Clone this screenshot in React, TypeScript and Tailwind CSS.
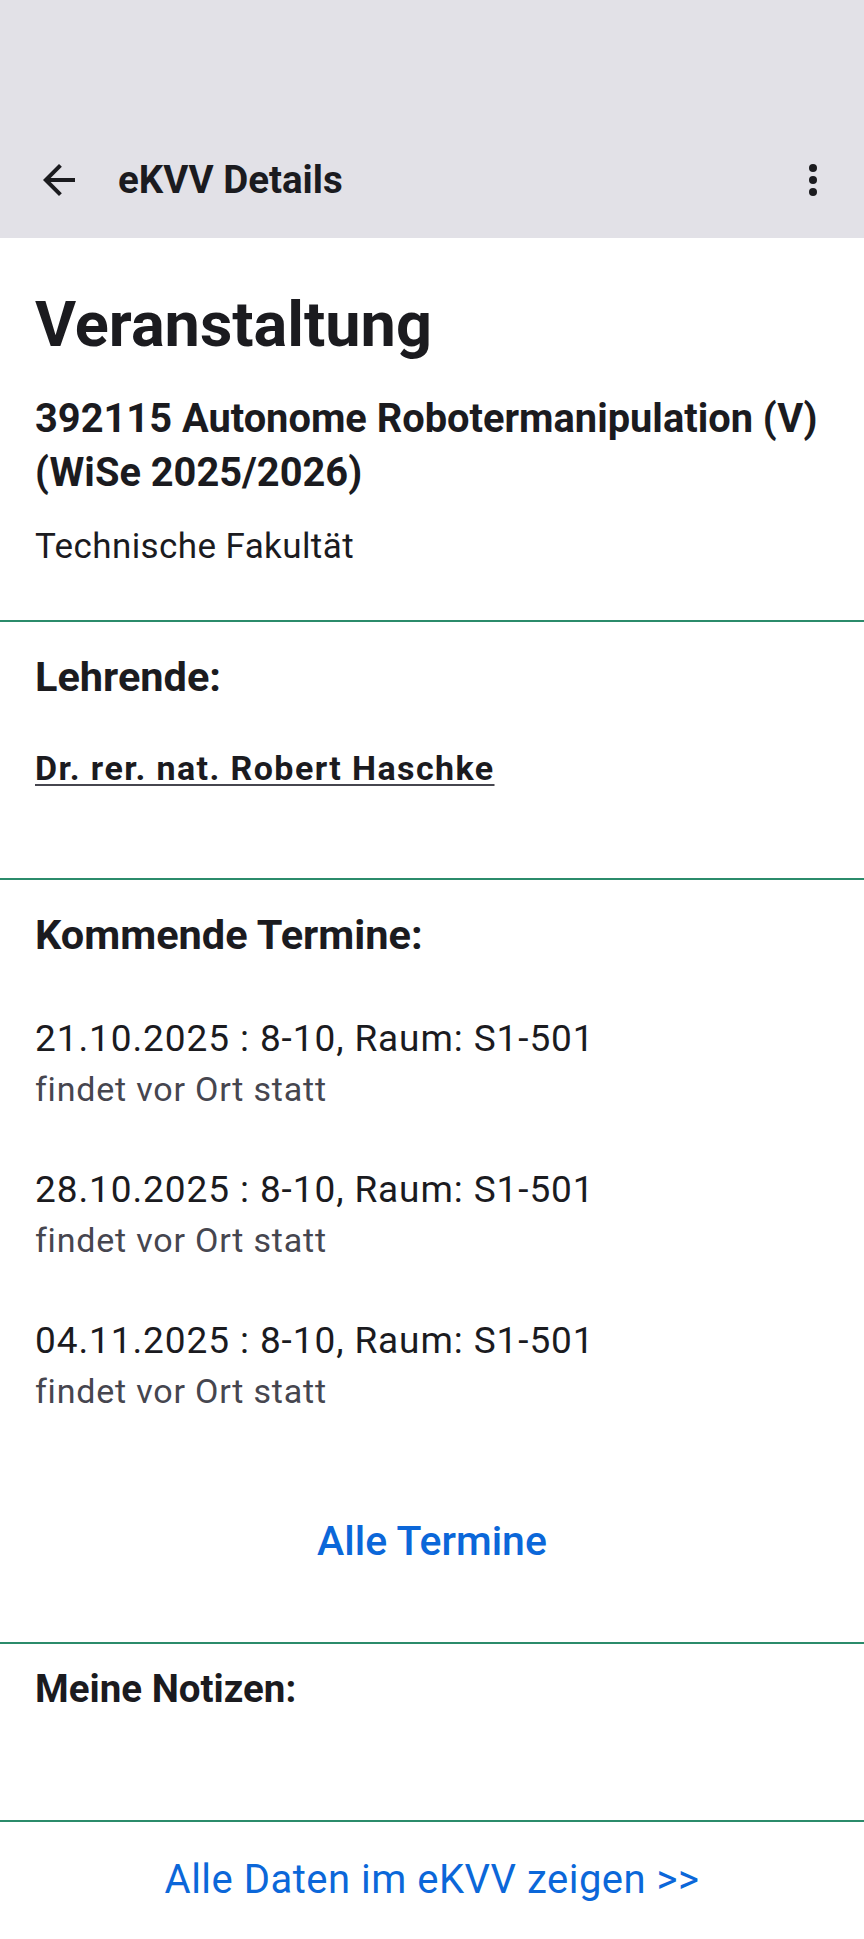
const termine = [
  { datum: "21.10.2025", zeit: "8-10", raum: "S1-501" },
  { datum: "28.10.2025", zeit: "8-10", raum: "S1-501" },
  { datum: "04.11.2025", zeit: "8-10", raum: "S1-501" },
];

function Divider() {
  return <div className="h-[2px] w-full bg-[#2b8b6b]" />;
}

export default function App() {
  return (
    <div className="w-full min-h-[1939px] bg-white text-[#1b1b1f] font-['Roboto',sans-serif]">
      {/* app bar */}
      <div className="h-[238px] bg-[#e2e1e7] flex flex-col justify-end">
        <div className="h-[116px] flex items-center">
          <div className="w-[118px] flex justify-center">
            <svg width="48" height="48" viewBox="0 -960 960 960" fill="#1b1b1f">
              <path d="M313-440l224 224-57 56-320-320 320-320 57 56-224 224h487v80H313z" />
            </svg>
          </div>
          <h1 className="flex-1 text-[38.5px] font-bold leading-[48px]">eKVV Details</h1>
          <div className="w-[102px] flex justify-center">
            <svg width="48" height="48" viewBox="0 0 48 48" fill="#1b1b1f">
              <circle cx="24" cy="12" r="4" />
              <circle cx="24" cy="24" r="4" />
              <circle cx="24" cy="36" r="4" />
            </svg>
          </div>
        </div>
      </div>

      {/* Veranstaltung */}
      <div className="px-[35px] pt-[49px] pb-[51px]">
        <h2 className="text-[63px] font-bold leading-[76px]">Veranstaltung</h2>
        <p className="mt-[29px] text-[39.8px] font-bold leading-[54px]">
          392115 Autonome Robotermanipulation (V) (WiSe 2025/2026)
        </p>
        <p className="mt-[25px] text-[35px] leading-[44px] tracking-[0.4px]">Technische Fakultät</p>
      </div>
      <Divider />

      {/* Lehrende */}
      <div className="px-[35px] pt-[28px] pb-[90px]">
        <h3 className="text-[41.5px] font-bold leading-[54px]">Lehrende:</h3>
        <a className="block mt-[44px] text-[34px] font-bold leading-[40px] tracking-[1.4px] underline decoration-[#46464f] decoration-2 underline-offset-[4px]">
          Dr. rer. nat. Robert Haschke
        </a>
      </div>
      <Divider />

      {/* Termine */}
      <div className="px-[35px] pt-[28px] pb-[74px]">
        <h3 className="text-[41.5px] font-bold leading-[54px]">Kommende Termine:</h3>
        <div className="mt-[54px] flex flex-col gap-[58px]">
          {termine.map((t) => (
            <div key={t.datum} className="flex flex-col gap-[7px]">
              <p className="text-[37px] leading-[46px] tracking-[0.9px]">
                {t.datum} : {t.zeit}, Raum: {t.raum}
              </p>
              <p className="text-[34px] leading-[40px] tracking-[0.8px] text-[#46464f]">findet vor Ort statt</p>
            </div>
          ))}
        </div>
        <div className="mt-[103px] text-center text-[41px] font-medium leading-[54px] text-[#0b67d9]">
          Alle Termine
        </div>
      </div>
      <Divider />

      {/* Notizen */}
      <div className="px-[35px] pt-[18px] pb-[104px]">
        <h3 className="text-[38.5px] font-bold leading-[54px]">Meine Notizen:</h3>
      </div>
      <Divider />

      <div className="pt-[31px] text-center text-[40px] leading-[54px] tracking-[0.5px] text-[#0b67d9]">
        Alle Daten im eKVV zeigen &gt;&gt;
      </div>
    </div>
  );
}
